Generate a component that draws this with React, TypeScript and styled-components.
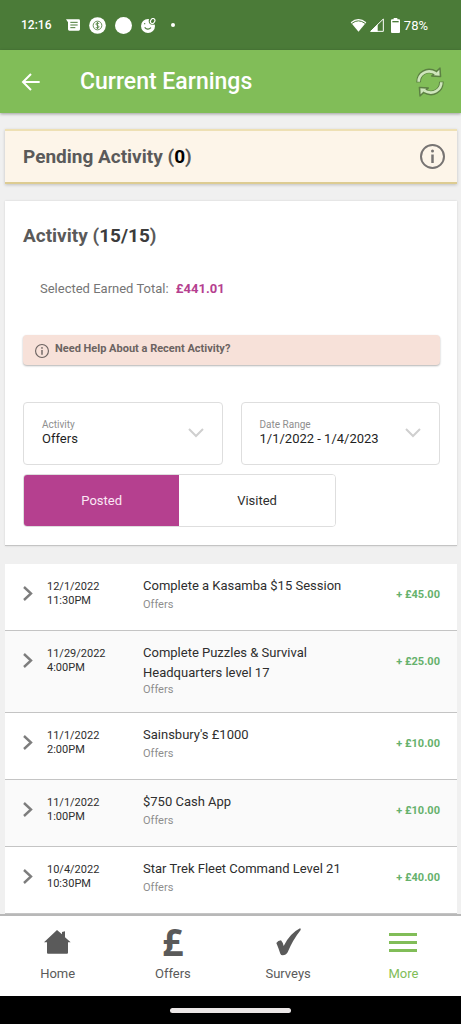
import React, { useState } from 'react';
import styled, { createGlobalStyle } from 'styled-components';

const GlobalStyle = createGlobalStyle`
  *, *::before, *::after { box-sizing: border-box; }
  body {
    margin: 0;
    background: #f0f0f0;
    color: #2e2e2e;
    font-family: Roboto, "Liberation Sans", sans-serif;
  }
  button, select { font: inherit; color: inherit; }
  svg { display: block; flex: none; }
`;

const Page = styled.div`
  display: flex;
  flex-direction: column;
  min-height: 100vh;
`;

const StatusBar = styled.div`
  display: flex;
  align-items: center;
  justify-content: space-between;
  height: 50px;
  padding: 0 33px 0 21px;
  background: #4b7b38;
  color: #fff;
  font-size: 13px;
`;

const StatusGroup = styled.div<{ $gap: number }>`
  display: flex;
  align-items: center;
  gap: ${(p) => p.$gap}px;
`;

const Clock = styled.span`
  margin-right: 6px;
  font-size: 12px;
  font-weight: 500;
`;

const MoreDot = styled.span`
  width: 4px;
  height: 4px;
  margin-left: 6px;
  border-radius: 50%;
  background: #fff;
`;

const Battery = styled.span`
  display: flex;
  align-items: center;
  gap: 4px;
  margin-left: 4px;
`;

const AppBar = styled.header`
  display: flex;
  align-items: center;
  height: 63px;
  padding: 0 17px 0 21px;
  background: #81bd58;
  color: #fff;
  box-shadow: 0 1px 3px rgba(0, 0, 0, 0.35);
`;

const IconButton = styled.button`
  display: flex;
  padding: 0;
  border: 0;
  background: none;
  cursor: pointer;
`;

const AppTitle = styled.h1`
  flex: 1;
  margin: 0 0 0 39px;
  font-size: 23px;
  line-height: 28px;
  font-weight: 500;
`;

const Main = styled.main`
  flex: 1;
  padding: 16px 4px 0 5px;
`;

const PendingCard = styled.section`
  display: flex;
  align-items: center;
  justify-content: space-between;
  height: 55px;
  margin-bottom: 17px;
  padding: 0 12px 0 18px;
  background: #fdf5e9;
  border-top: 2px solid #eee0b4;
  border-bottom: 2px solid #ddcc92;
  box-shadow: 0 1px 3px rgba(0, 0, 0, 0.2);
  color: #777473;
`;

const Heading = styled.h2`
  margin: 0;
  font-size: 19px;
  line-height: 24px;
  font-weight: 700;
  color: #5a5a5a;
`;

const Count = styled.span<{ $tone: string }>`
  color: ${(p) => p.$tone};
`;

const FilterCard = styled.section`
  padding: 23px 17px 18px 18px;
  background: #fff;
  border-bottom: 1px solid #c4c4c4;
  box-shadow: 0 0 2px rgba(0, 0, 0, 0.12);
`;

const Total = styled.p`
  margin: 32px 0 37px 17px;
  font-size: 13px;
  line-height: 18px;
  color: #757575;
`;

const TotalValue = styled.strong`
  margin-left: 4px;
  font-weight: 700;
  color: #b5408f;
`;

const HelpButton = styled.button`
  display: flex;
  align-items: flex-start;
  gap: 6px;
  width: 100%;
  height: 30px;
  margin-bottom: 37px;
  padding: 6px 12px;
  border: 0;
  border-radius: 4px;
  background: #f7e1d9;
  box-shadow: 0 1px 2px rgba(0, 0, 0, 0.3);
  color: #6b6361;
  font-size: 11px;
  line-height: 16px;
  font-weight: 700;
  text-align: left;
  cursor: pointer;

  svg { margin-top: 3px; }
`;

const Filters = styled.div`
  display: grid;
  grid-template-columns: 1fr 1fr;
  gap: 18px;
  margin-bottom: 9px;
`;

const Field = styled.div`
  display: flex;
  align-items: center;
  height: 63px;
  padding: 0 18px 2px;
  border: 1px solid #dedede;
  border-radius: 4px;
  color: #cfcfcf;
`;

const FieldText = styled.div`
  display: flex;
  flex: 1;
  flex-direction: column;
  min-width: 0;
`;

const FieldLabel = styled.label`
  font-size: 10px;
  line-height: 12px;
  color: #8e8e8e;
`;

const Select = styled.select`
  width: 100%;
  height: 16px;
  padding: 0;
  border: 0;
  background: none;
  appearance: none;
  font-size: 13px;
  line-height: 16px;
  color: #1f1f1f;
`;

const Segments = styled.div`
  display: grid;
  grid-template-columns: 1fr 1fr;
  width: 75%;
  height: 53px;
  border: 1px solid #dedede;
  border-radius: 4px;
  overflow: hidden;
`;

const Segment = styled.button<{ $active: boolean }>`
  padding: 0;
  border: 0;
  background: ${(p) => (p.$active ? '#b5408f' : '#fff')};
  color: ${(p) => (p.$active ? '#fbe8f5' : '#2e2e2e')};
  font-size: 13px;
  cursor: pointer;
`;

const ActivityList = styled.ul`
  margin: 18px 0 0;
  padding: 0;
  list-style: none;
`;

const ActivityRow = styled.li`
  display: grid;
  grid-template-columns: 24px 96px 1fr auto;
  align-items: start;
  min-height: 67px;
  padding: 12px 17px 15px 18px;
  background: #fff;
  border-bottom: 1px solid #c4c4c4;

  &:nth-child(even) { background: #fafafa; }
`;

const Expand = styled(IconButton)`
  margin-top: 10px;
  color: #7d7d7d;
`;

const When = styled.time`
  display: flex;
  flex-direction: column;
  margin-top: 4px;
  font-size: 11px;
  line-height: 14px;
`;

const Title = styled.h3`
  max-width: 210px;
  min-height: 22px;
  margin: 0;
  font-size: 13px;
  line-height: 20px;
  font-weight: 400;
`;

const Category = styled.p`
  margin: 0;
  font-size: 11px;
  line-height: 14px;
  color: #8e8e8e;
`;

const Amount = styled.strong`
  margin-top: 12px;
  font-size: 11px;
  line-height: 14px;
  font-weight: 700;
  color: #66b16c;
`;

const BottomNav = styled.nav`
  position: sticky;
  bottom: 28px;
  display: grid;
  grid-template-columns: repeat(4, 1fr);
  height: 82px;
  background: #fff;
  border-top: 2px solid #b8b8b8;
`;

const NavLink = styled.a<{ $active?: boolean }>`
  display: flex;
  flex-direction: column;
  align-items: center;
  padding-top: 10px;
  color: ${(p) => (p.$active ? '#81bd58' : '#5a5a5a')};
  font-size: 13px;
  line-height: 16px;
  text-decoration: none;
`;

const NavIcon = styled.span`
  display: flex;
  align-items: center;
  justify-content: center;
  height: 32px;
  margin-bottom: 8px;
`;

const Pound = styled.span`
  font-family: "Open Sans", sans-serif;
  font-size: 37px;
  line-height: 32px;
  font-weight: 700;
`;

const GestureBar = styled.div`
  position: sticky;
  bottom: 0;
  display: flex;
  align-items: center;
  justify-content: center;
  height: 28px;
  background: #000;
`;

const GestureHandle = styled.span`
  width: 121px;
  height: 5px;
  border-radius: 3px;
  background: #ebe7e7;
`;

const MessageIcon = () => (
  <svg width="14" height="12" viewBox="0 0 42 36">
    <path d="M0 1h38q4 0 4 4v26q0 4-4 4H10q-4 0-4-4V10z" fill="#fff" />
    <path d="M13 10h22M13 18h22M13 26h15" stroke="#4b7b38" strokeWidth="3" />
  </svg>
);

const CoinIcon = () => (
  <svg width="17" height="17" viewBox="0 0 51 51">
    <circle cx="25.500" cy="25.500" r="25" fill="#fff" />
    <circle cx="25.500" cy="25.500" r="13" fill="none" stroke="#4b7b38" strokeWidth="2.500" />
    <path d="M30 21q-1-3-5-3-4 0-4 3.500 0 3 4.500 4t4.500 4q0 3.500-4.500 3.500-4 0-5-3M25.500 15v21" fill="none" stroke="#4b7b38" strokeWidth="2.500" />
  </svg>
);

const DotIcon = () => (
  <svg width="17" height="17" viewBox="0 0 10 10">
    <circle cx="5" cy="5" r="5" fill="#fff" />
  </svg>
);

const FaceIcon = () => (
  <svg width="15" height="15" viewBox="0 0 45 45">
    <circle cx="21" cy="24" r="21" fill="#fff" />
    <ellipse cx="35" cy="9" rx="12" ry="11" fill="#4b7b38" />
    <ellipse cx="35" cy="9" rx="6" ry="8" transform="rotate(30 35 9)" fill="none" stroke="#fff" strokeWidth="3.500" />
    <path d="M11 28q9 10 19 1" fill="none" stroke="#4b7b38" strokeWidth="3.500" />
    <circle cx="11" cy="17" r="2" fill="#4b7b38" />
  </svg>
);

const WifiIcon = () => (
  <svg width="17" height="14" viewBox="0 0 51 42">
    <path d="M2 13Q25 -7 49 13L25.500 41z" fill="#fff" />
    <path d="M6 16Q25 1 45 16" fill="none" stroke="#4b7b38" strokeWidth="3" />
  </svg>
);

const SignalIcon = () => (
  <svg width="14" height="14" viewBox="0 0 42 42">
    <path d="M2 40L40 3V40z" fill="none" stroke="#fff" strokeWidth="3" />
    <path d="M1 41L23 19V41z" fill="#fff" />
  </svg>
);

const BatteryIcon = () => (
  <svg width="9" height="15" viewBox="0 0 27 45">
    <path d="M8 0h11v4h5q3 0 3 3v35q0 3-3 3H3q-3 0-3-3V7q0-3 3-3h5z" fill="#fff" />
    <path d="M4 9h19v4H4z" fill="#4b7b38" />
  </svg>
);

const BackIcon = () => (
  <svg width="20" height="18" viewBox="0 0 60 54" fill="none" stroke="#fff" strokeWidth="6">
    <path d="M56 27H8M30 3L6 27l24 24" />
  </svg>
);

const RefreshArrow = () => (
  <>
    <path d="M8 46C7 20 32 2 60 18" fill="none" stroke="#5c8043" strokeWidth="14" />
    <path d="M72 3L74 29L47 27z" fill="#5c8043" stroke="#5c8043" strokeWidth="4" strokeLinejoin="round" />
    <path d="M8 44C8 22 32 4 60 19" fill="none" stroke="#cfe6bd" strokeWidth="8" />
    <path d="M70 8L71 26L53 25z" fill="#cfe6bd" />
  </>
);

const RefreshIcon = () => (
  <svg width="28" height="30" viewBox="0 0 84 90">
    <RefreshArrow />
    <g transform="rotate(180 42 45)">
      <RefreshArrow />
    </g>
  </svg>
);

const InfoIcon = ({ size }: { size: number }) => (
  <svg width={size} height={size} viewBox="0 0 50 50" fill="none" stroke="currentColor">
    <circle cx="25" cy="25" r="23" strokeWidth="4" />
    <path d="M25 21v17" strokeWidth="5" />
    <circle cx="25" cy="14" r="3" fill="currentColor" stroke="none" />
  </svg>
);

const DownIcon = () => (
  <svg width="16" height="10" viewBox="0 0 16 10" fill="none" stroke="currentColor" strokeWidth="2">
    <path d="M1 1l7 7 7-7" />
  </svg>
);

const RightIcon = () => (
  <svg width="10" height="15" viewBox="0 0 10 15" fill="none" stroke="currentColor" strokeWidth="2.400">
    <path d="M1 1l7 6.500L1 14" />
  </svg>
);

const HomeIcon = () => (
  <svg width="27" height="24" viewBox="0 0 81 72" fill="currentColor">
    <path d="M39 0L54 13V6L63 4V22L80 37H72V68Q72 71 69 71H12Q9 71 9 68V37H0z" />
  </svg>
);

const CheckIcon = () => (
  <svg width="25" height="28" viewBox="0 0 75 84" fill="currentColor">
    <path d="M1 45Q6 38 15 37Q20 42 23 54Q42 16 72 1Q75 1 74 6Q50 36 35 73Q30 82 20 82Q15 82 13 77Q7 59 1 45z" />
  </svg>
);

const MenuIcon = () => (
  <svg width="28" height="19" viewBox="0 0 28 19" fill="currentColor">
    <path d="M0 0h28v3H0zM0 8h28v3H0zM0 16h28v3H0z" />
  </svg>
);

const activities = [
  { date: '12/1/2022', time: '11:30PM', title: 'Complete a Kasamba $15 Session', amount: '+ £45.00' },
  { date: '11/29/2022', time: '4:00PM', title: 'Complete Puzzles & Survival Headquarters level 17', amount: '+ £25.00' },
  { date: '11/1/2022', time: '2:00PM', title: "Sainsbury's £1000", amount: '+ £10.00' },
  { date: '11/1/2022', time: '1:00PM', title: '$750 Cash App', amount: '+ £10.00' },
  { date: '10/4/2022', time: '10:30PM', title: 'Star Trek Fleet Command Level 21', amount: '+ £40.00' },
];

const tabs = ['Posted', 'Visited'];

export default function App() {
  const [tab, setTab] = useState('Posted');

  return (
    <Page>
      <GlobalStyle />
      <StatusBar>
        <StatusGroup $gap={9}>
          <Clock>12:16</Clock>
          <MessageIcon />
          <CoinIcon />
          <DotIcon />
          <FaceIcon />
          <MoreDot />
        </StatusGroup>
        <StatusGroup $gap={3}>
          <WifiIcon />
          <SignalIcon />
          <Battery><BatteryIcon />78%</Battery>
        </StatusGroup>
      </StatusBar>

      <AppBar>
        <IconButton type="button" aria-label="Back"><BackIcon /></IconButton>
        <AppTitle>Current Earnings</AppTitle>
        <IconButton type="button" aria-label="Refresh"><RefreshIcon /></IconButton>
      </AppBar>

      <Main>
        <PendingCard>
          <Heading>Pending Activity (<Count $tone="#000">0</Count>)</Heading>
          <IconButton type="button" aria-label="About pending activity"><InfoIcon size={25} /></IconButton>
        </PendingCard>

        <FilterCard>
          <Heading>Activity (<Count $tone="#3c3c3c">15/15</Count>)</Heading>
          <Total>Selected Earned Total: <TotalValue>£441.01</TotalValue></Total>
          <HelpButton type="button">
            <InfoIcon size={14} />
            Need Help About a Recent Activity?
          </HelpButton>
          <Filters>
            <Field>
              <FieldText>
                <FieldLabel htmlFor="activity">Activity</FieldLabel>
                <Select id="activity"><option>Offers</option></Select>
              </FieldText>
              <DownIcon />
            </Field>
            <Field>
              <FieldText>
                <FieldLabel htmlFor="range">Date Range</FieldLabel>
                <Select id="range"><option>1/1/2022 - 1/4/2023</option></Select>
              </FieldText>
              <DownIcon />
            </Field>
          </Filters>
          <Segments>
            {tabs.map((name) => (
              <Segment
                key={name}
                type="button"
                $active={tab === name}
                aria-pressed={tab === name}
                onClick={() => setTab(name)}
              >
                {name}
              </Segment>
            ))}
          </Segments>
        </FilterCard>

        <ActivityList>
          {activities.map((item) => (
            <ActivityRow key={item.title}>
              <Expand type="button" aria-label={`Show ${item.title}`}><RightIcon /></Expand>
              <When><span>{item.date}</span><span>{item.time}</span></When>
              <div>
                <Title>{item.title}</Title>
                <Category>Offers</Category>
              </div>
              <Amount>{item.amount}</Amount>
            </ActivityRow>
          ))}
        </ActivityList>
      </Main>

      <BottomNav>
        <NavLink href="#home"><NavIcon><HomeIcon /></NavIcon>Home</NavLink>
        <NavLink href="#offers"><NavIcon><Pound aria-hidden="true">£</Pound></NavIcon>Offers</NavLink>
        <NavLink href="#surveys"><NavIcon><CheckIcon /></NavIcon>Surveys</NavLink>
        <NavLink href="#more" $active><NavIcon><MenuIcon /></NavIcon>More</NavLink>
      </BottomNav>
      <GestureBar><GestureHandle /></GestureBar>
    </Page>
  );
}
